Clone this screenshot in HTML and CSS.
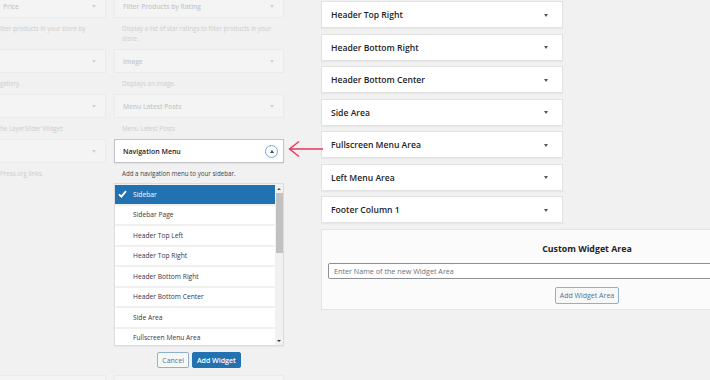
FILE: index.html
```html
<!DOCTYPE html>
<html lang="en">
    <head>
        <meta charset="UTF-8">
        <title>Widgets</title>
        <link rel="stylesheet" href="styles.css">
    </head>
    <body>
        <div class="screen">
            <div class="available">
                <!-- row 1 -->
                <div class="widget cut">
                    <div class="w-top"><span class="w-title">Price</span><span class="caret"></span></div>
                    <p class="w-desc">ilter products in your store by</p>
                </div>
                <div class="widget">
                    <div class="w-top"><span class="w-title">Filter Products by Rating</span><span class="caret"></span></div>
                    <p class="w-desc">Display a list of star ratings to filter products in your store.</p>
                </div>
                <!-- row 2 -->
                <div class="widget cut">
                    <div class="w-top"><span class="w-title"></span><span class="caret"></span></div>
                    <p class="w-desc">gallery.</p>
                </div>
                <div class="widget">
                    <div class="w-top"><span class="w-title">Image</span><span class="caret"></span></div>
                    <p class="w-desc">Displays an image.</p>
                </div>
                <!-- row 3 -->
                <div class="widget cut">
                    <div class="w-top"><span class="w-title"></span><span class="caret"></span></div>
                    <p class="w-desc">he LayerSlider Widget</p>
                </div>
                <div class="widget">
                    <div class="w-top"><span class="w-title">Menu Latest Posts</span><span class="caret"></span></div>
                    <p class="w-desc">Menu Latest Posts</p>
                </div>
                <!-- row 4 -->
                <div class="widget cut">
                    <div class="w-top"><span class="w-title"></span><span class="caret"></span></div>
                    <p class="w-desc">Press.org links.</p>
                </div>
                <div class="widget open">
                    <div class="w-top">
                        <span class="w-title">Navigation Menu</span>
                        <span class="toggle"><span class="up"></span></span>
                    </div>
                    <p class="w-desc">Add a navigation menu to your sidebar.</p>
                    <div class="chooser">
                        <ul class="choices">
                            <li class="selected">
                                <svg class="check" width="9" height="8" viewBox="0 0 9 8"><path d="M1 4.3 L3.4 6.6 L8 1.2" fill="none" stroke="#fff" stroke-width="1.8"/></svg>Sidebar
                            </li>
                            <li>Sidebar Page</li>
                            <li>Header Top Left</li>
                            <li>Header Top Right</li>
                            <li>Header Bottom Right</li>
                            <li>Header Bottom Center</li>
                            <li>Side Area</li>
                            <li>Fullscreen Menu Area</li>
                        </ul>
                        <div class="scrollbar">
                            <span class="sb-arrow"><span class="up"></span></span>
                            <span class="sb-thumb"></span>
                            <span class="sb-arrow down"><span class="caret dark"></span></span>
                        </div>
                    </div>
                    <div class="actions">
                        <button class="btn">Cancel</button>
                        <button class="btn primary">Add Widget</button>
                    </div>
                </div>
                <!-- row 5 -->
                <div class="widget cut">
                    <div class="w-top"></div>
                </div>
                <div class="widget">
                    <div class="w-top"></div>
                </div>
            </div>

            <div class="sidebars">
                <div class="area"><span>Header Top Right</span><span class="caret dark"></span></div>
                <div class="area"><span>Header Bottom Right</span><span class="caret dark"></span></div>
                <div class="area"><span>Header Bottom Center</span><span class="caret dark"></span></div>
                <div class="area"><span>Side Area</span><span class="caret dark"></span></div>
                <div class="area"><span>Fullscreen Menu Area</span><span class="caret dark"></span></div>
                <div class="area"><span>Left Menu Area</span><span class="caret dark"></span></div>
                <div class="area"><span>Footer Column 1</span><span class="caret dark"></span></div>

                <div class="custom">
                    <h3>Custom Widget Area</h3>
                    <input class="name" type="text" placeholder="Enter Name of the new Widget Area">
                    <button class="btn">Add Widget Area</button>
                </div>
            </div>
        </div>

        <svg class="pointer" width="40" height="20" viewBox="0 0 40 20">
            <path d="M2.5 10 L36 10 M12 2.5 L2.5 10 L12 17.5" fill="none" stroke="#e8365d" stroke-width="1.4"/>
        </svg>
    </body>
</html>
```

FILE: styles.css
```css
body{
    margin: 0;
    height: 380px;
    overflow: hidden;
    background: #f1f1f1;
    font-family: "Open Sans", "Liberation Sans", sans-serif;
    color: #1d2327;
    position: relative;
}
.screen{
    display: flex;
    align-items: flex-start;
    width: 900px;
}

/* small triangles */
.caret{
    width: 0;
    height: 0;
    border-left: 2.5px solid transparent;
    border-right: 2.5px solid transparent;
    border-top: 3px solid #d2d2d2;
}
.caret.dark{
    border-top-color: #50575e;
}
.up{
    width: 0;
    height: 0;
    border-left: 2.5px solid transparent;
    border-right: 2.5px solid transparent;
    border-bottom: 3px solid #3c434a;
}

/* available widgets (faded) */
.available{
    display: grid;
    grid-template-columns: 106px 170px;
    column-gap: 8px;
    align-items: start;
    margin-top: -6px;
}
.w-top{
    display: flex;
    align-items: center;
    justify-content: space-between;
    height: 24px;
    box-sizing: border-box;
    padding: 0 9px 0 8px;
    background: #f4f4f4;
    border: 1px solid #eaeaea;
}
.w-title{
    font-size: 6.6px;
    font-weight: 600;
    color: #c8c8c8;
}
.w-desc{
    margin: 6px 0 5px;
    padding-left: 8px;
    font-size: 6.2px;
    line-height: 10px;
    color: #cdcdcd;
}
.cut .w-top{
    border-left: 0;
    padding-left: 3px;
}
.cut .w-desc{
    padding-left: 0;
    white-space: nowrap;
}

/* open widget */
.open .w-top{
    background: #fff;
    border-color: #c3c4c7;
    box-shadow: 0 1px 1px rgba(0,0,0,.05);
    padding-right: 5px;
}
.open .w-title{
    color: #1d2327;
    font-size: 7px;
}
.open .w-desc{
    color: #3c434a;
    margin-bottom: 4px;
}
.toggle{
    width: 11px;
    height: 11px;
    border: 1px solid #7aa3d4;
    border-radius: 50%;
    display: flex;
    align-items: center;
    justify-content: center;
}
.chooser{
    display: flex;
    height: 163px;
    box-sizing: border-box;
    border: 1px solid #dcdcde;
    background: #fff;
    box-shadow: 0 1px 1px rgba(0,0,0,.04);
    overflow: hidden;
}
.choices{
    flex: 1;
    margin: 0;
    padding: 1px 0 0;
    list-style: none;
    background: #f0f0f1;
}
.choices li{
    height: 18.5px;
    margin-bottom: 2px;
    display: flex;
    align-items: center;
    padding-left: 18px;
    background: #fff;
    font-size: 6.7px;
    color: #3b3347;
    position: relative;
}
.choices li.selected{
    background: #2271b1;
    color: #fff;
}
.check{
    position: absolute;
    left: 3px;
    top: 5px;
}
.scrollbar{
    width: 8px;
    display: flex;
    flex-direction: column;
    align-items: center;
    background: #f1f1f1;
}
.sb-arrow{
    height: 9px;
    display: flex;
    align-items: center;
}
.sb-arrow .up{
    border-bottom-color: #555;
    border-left-width: 2px;
    border-right-width: 2px;
    border-bottom-width: 2.5px;
}
.sb-arrow .caret{
    border-top-color: #333;
    border-left-width: 2px;
    border-right-width: 2px;
    border-top-width: 2.5px;
}
.sb-arrow.down{
    margin-top: auto;
}
.sb-thumb{
    width: 7px;
    height: 60px;
    background: #c1c1c1;
}
.actions{
    display: flex;
    justify-content: center;
    gap: 3px;
    margin: 6px 0 7px;
}
.btn{
    height: 16px;
    padding: 0 4px;
    font-family: inherit;
    font-size: 7px;
    border-radius: 2px;
    border: 1px solid #8fb0d1;
    background: #f6f7f7;
    color: #4f7497;
}
.btn.primary{
    background: #2271b1;
    border-color: #2271b1;
    color: #fff;
    font-weight: 600;
}

/* sidebars */
.sidebars{
    width: 242px;
    margin-left: 37px;
    padding-top: 1px;
}
.area{
    display: flex;
    align-items: center;
    justify-content: space-between;
    height: 27px;
    box-sizing: border-box;
    margin-bottom: 5.5px;
    padding: 1.5px 14px 0 9px;
    background: #fff;
    border: 1px solid #e2e2e2;
    box-shadow: 0 1px 1px rgba(0,0,0,.04);
    font-size: 8.6px;
    font-weight: 600;
    color: #1d2327;
}
.custom{
    width: 532px;
    box-sizing: border-box;
    margin-top: 0.5px;
    padding: 13px 6px 5px;
    background: #fbfbfb;
    border: 1px solid #e5e5e5;
    display: flex;
    flex-direction: column;
    align-items: center;
}
.custom h3{
    margin: 0;
    font-size: 8.8px;
    line-height: 12px;
    font-weight: 700;
}
.name{
    align-self: stretch;
    margin-top: 8px;
    height: 16px;
    box-sizing: border-box;
    padding: 0 5px;
    border: 1px solid #8c8f94;
    border-radius: 2px;
    background: #fff;
    font-family: inherit;
    font-size: 7.2px;
}
.name::placeholder{
    color: #6c7278;
}
.custom .btn{
    margin-top: 8px;
    height: 17px;
}

/* annotation arrow */
.pointer{
    position: absolute;
    left: 287px;
    top: 139px;
}
```
